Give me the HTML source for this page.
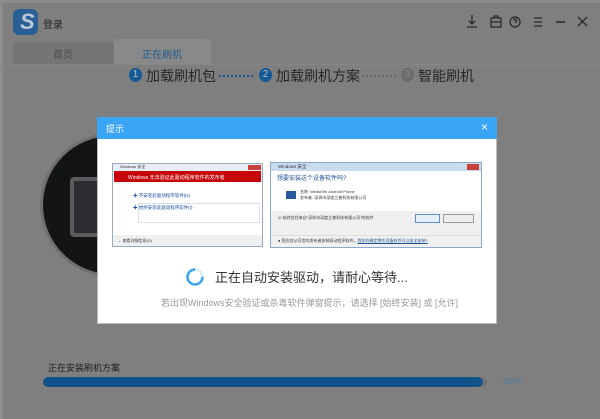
<!DOCTYPE html>
<html style="background:#7f7f7f"><head><meta charset="utf-8"><style>
*{margin:0;padding:0;box-sizing:border-box}
html,body{width:600px;height:419px;overflow:hidden;background:#7f7f7f}
body{font-family:"Liberation Sans","Noto Sans CJK SC",sans-serif;position:relative}
.a{position:absolute}
.t{white-space:nowrap}
</style></head><body>
<div class="a" style="left:0;top:0;width:600px;height:419px;background:#7f7f7f"></div>
<div class="a" style="left:0;top:0;width:600px;height:3px;background:#8a8a8a"></div>
<div class="a" style="left:0;top:3px;width:3px;height:416px;background:#8c8c8c"></div>
<!-- logo -->
<div class="a" style="left:13px;top:9px;width:25px;height:26px;border-radius:6px;background:#2a5f95"></div>
<div class="a t" style="left:20px;top:9px;font-size:22px;font-style:italic;font-weight:bold;color:#b9c9d9">S</div>
<div class="a t" style="left:43px;top:16px;font-size:10px;color:#222">登录</div>
<!-- top icons -->
<svg class="a" style="left:462px;top:12px" width="140" height="20" fill="none" stroke="#2a2a2a" stroke-width="1.3">
<path d="M10 3v9M7 9l3 3 3-3M5 15h10"/>
<rect x="29" y="6" width="10" height="9"/><path d="M32 6V4h4v2M29 10h10"/>
<circle cx="53" cy="10" r="5"/><path d="M51.5 8.5a1.5 1.5 0 1 1 2 1.4V11M53.5 13v.5"/>
<path d="M72 6h8M72 10h8M72 14h8"/>
<path d="M94 10h9" stroke-width="1.6"/>
<path d="M116 5l9 9M125 5l-9 9"/>
</svg>
<!-- tabs -->
<div class="a" style="left:13px;top:42px;width:101px;height:22px;background:#757575;border-radius:3px 3px 0 0"></div>
<div class="a t" style="left:53px;top:46px;font-size:10px;color:#4a4a4a">首页</div>
<div class="a" style="left:114px;top:39px;width:97px;height:25px;background:#898989;border-radius:4px 4px 0 0"></div>
<div class="a t" style="left:142px;top:46px;font-size:10px;color:#1d5b90">正在刷机</div>
<div class="a" style="left:3px;top:64px;width:597px;height:1px;background:#868686"></div>
<!-- steps -->
<div class="a" style="left:129px;top:68px;width:13px;height:14px;border-radius:50%;background:#145a96;color:#bbb;font-size:10px;text-align:center;line-height:14px">1</div>
<div class="a t" style="left:146px;top:66px;font-size:14px;color:#262626">加载刷机包</div>
<div class="a" style="left:219px;top:75px;width:34px;border-top:2px dotted #145a96"></div>
<div class="a" style="left:259px;top:68px;width:13px;height:14px;border-radius:50%;background:#145a96;color:#bbb;font-size:10px;text-align:center;line-height:14px">2</div>
<div class="a t" style="left:276px;top:66px;font-size:14px;color:#262626">加载刷机方案</div>
<div class="a" style="left:362px;top:75px;width:34px;border-top:2px dotted #6a6a6a"></div>
<div class="a" style="left:401px;top:68px;width:13px;height:14px;border-radius:50%;background:#6c6c6c;color:#888;font-size:10px;text-align:center;line-height:14px">3</div>
<div class="a t" style="left:418px;top:66px;font-size:14px;color:#262626">智能刷机</div>
<!-- circle -->
<div class="a" style="left:40px;top:133px;width:144px;height:144px;border-radius:50%;background:#6f6f6f"></div>
<div class="a" style="left:43px;top:136px;width:138px;height:138px;border-radius:50%;background:#131416"></div>
<div class="a" style="left:70px;top:177px;width:40px;height:60px;border-radius:4px;background:#5a5b5c"></div>
<div class="a" style="left:74px;top:181px;width:36px;height:52px;background:#2c2e31"></div>
<!-- dialog -->
<div class="a" style="left:97px;top:117px;width:400px;height:207px;background:#fff;border:1px solid #bbb"></div>
<div class="a" style="left:97px;top:117px;width:400px;height:22px;background:#39a5f4"></div>
<div class="a t" style="left:106px;top:122px;font-size:9px;color:#fff">提示</div>
<div class="a t" style="left:481px;top:120px;font-size:12px;color:#fff">×</div>
<!-- left shot -->
<div class="a" style="left:112px;top:163px;width:151px;height:84px;background:#fff;border:1px solid #9ab"></div>
<div class="a" style="left:113px;top:164px;width:149px;height:7px;background:#e7edf4"></div>
<div class="a t" style="left:120px;top:164px;font-size:4px;color:#333">Windows 安全</div>
<div class="a" style="left:248px;top:165px;width:13px;height:5px;background:#c9423a"></div>
<div class="a" style="left:114px;top:171px;width:147px;height:11px;background:#c6050a"></div>
<div class="a t" style="left:128px;top:174px;font-size:5px;color:#fff">Windows 无法验证此驱动程序软件的发布者</div>
<div class="a t" style="left:133px;top:193px;font-size:4.5px;color:#1b4ea0">✚ 不安装此驱动程序软件(N)</div>
<div class="a" style="left:138px;top:203px;width:122px;height:20px;border:1px solid #dde"></div>
<div class="a t" style="left:133px;top:205px;font-size:4.5px;color:#1b4ea0">✚ 始终安装此驱动程序软件(I)</div>
<div class="a" style="left:113px;top:235px;width:149px;height:11px;background:#eef0f2"></div>
<div class="a t" style="left:118px;top:238px;font-size:4px;color:#333">⌄ 查看详细信息(D)</div>
<!-- right shot -->
<div class="a" style="left:270px;top:162px;width:212px;height:86px;background:#fff;border:1px solid #8aa9cc"></div>
<div class="a" style="left:271px;top:163px;width:210px;height:8px;background:#c9dbee"></div>
<div class="a t" style="left:278px;top:164px;font-size:4.5px;color:#333">Windows 安全</div>
<div class="a" style="left:467px;top:164px;width:12px;height:6px;background:#c9423a"></div>
<div class="a t" style="left:277px;top:173px;font-size:6px;color:#1e4f95">想要安装这个设备软件吗?</div>
<div class="a" style="left:286px;top:191px;width:10px;height:8px;background:#2a5a9a"></div>
<div class="a t" style="left:300px;top:189px;font-size:4px;color:#333">名称: MediaTek Android Phone<br>发布者: 深圳市深度立普科技有限公司</div>
<div class="a" style="left:271px;top:211px;width:210px;height:36px;background:#f0f0f0"></div>
<div class="a t" style="left:278px;top:215px;font-size:4px;color:#333">☑ 始终信任来自"深圳市深度立普科技有限公司"的软件</div>
<div class="a" style="left:415px;top:214px;width:25px;height:9px;border:1px solid #5c8fd0;background:#e6eef8"></div>
<div class="a" style="left:443px;top:214px;width:31px;height:9px;border:1px solid #999;background:#eee"></div>
<div class="a" style="left:271px;top:235px;width:210px;height:1px;background:#ddd"></div>
<div class="a t" style="left:278px;top:238px;font-size:4px;color:#333">● 您应仅从可信的发布者安装驱动程序软件。<span style="color:#1e4f95;text-decoration:underline">我如何确定哪些设备软件可以安全安装?</span></div>
<!-- spinner -->
<svg class="a" style="left:185px;top:267px" width="20" height="20"><circle cx="10" cy="10" r="7.5" fill="none" stroke="#d6ebfb" stroke-width="2.5"/><path d="M10 2.5A7.5 7.5 0 1 0 17.5 10" fill="none" stroke="#3aa3ee" stroke-width="2.5"/></svg>
<div class="a t" style="left:215px;top:267px;font-size:13px;color:#333">正在自动安装驱动，请耐心等待...</div>
<div class="a t" style="left:161px;top:296px;font-size:9px;color:#999">若出现Windows安全验证或杀毒软件弹窗提示，请选择 [始终安装] 或 [允许]</div>
<!-- progress -->
<div class="a t" style="left:48px;top:361px;font-size:9px;color:#1f1f1f">正在安装刷机方案</div>
<div class="a" style="left:43px;top:377px;width:444px;height:10px;border-radius:5px;background:#737373"></div>
<div class="a" style="left:43px;top:377px;width:440px;height:10px;border-radius:5px;background:#13538a"></div>
<div class="a t" style="left:503px;top:376px;font-size:9px;color:#4f7a9c">99%</div>
</body></html>
